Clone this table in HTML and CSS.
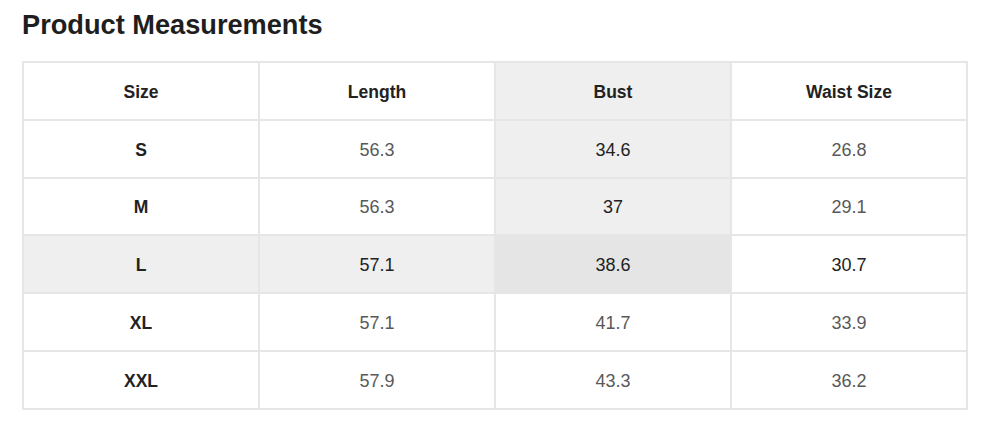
FILE: index.html
```html
<!DOCTYPE html>
<html>
<head>
<meta charset="utf-8">
<link rel="stylesheet" href="styles.css">
</head>
<body>
<h1 class="title">Product Measurements</h1>
<table class="measure">
  <thead>
    <tr><th>Size</th><th>Length</th><th class="hl">Bust</th><th>Waist Size</th></tr>
  </thead>
  <tbody>
    <tr><td class="size">S</td><td>56.3</td><td class="hl">34.6</td><td>26.8</td></tr>
    <tr><td class="size">M</td><td>56.3</td><td class="hl">37</td><td>29.1</td></tr>
    <tr><td class="size hl">L</td><td class="hl">57.1</td><td class="hl-cross">38.6</td><td class="dark">30.7</td></tr>
    <tr><td class="size">XL</td><td>57.1</td><td>41.7</td><td>33.9</td></tr>
    <tr><td class="size">XXL</td><td>57.9</td><td>43.3</td><td>36.2</td></tr>
  </tbody>
</table>
</body>
</html>
```
FILE: styles.css
```css
html, body {
  margin: 0;
  background: #ffffff;
}
body {
  padding: 9px 22px 0 22px;
  font-family: "Liberation Sans", Arial, sans-serif;
  color: #222222;
}
.title {
  margin: 0 0 20px 0;
  font-size: 27.2px;
  line-height: 32px;
  font-weight: 700;
  color: #1e1e1e;
}
.measure {
  width: 946px;
  border-collapse: collapse;
  table-layout: fixed;
  border: 2px solid #e6e6e6;
}
.measure th,
.measure td {
  border: 2px solid #e6e6e6;
  height: 52.8px;
  padding: 3px 0 0 0;
  text-align: center;
  vertical-align: middle;
  font-size: 18px;
  color: #595959;
}
.measure th {
  font-weight: 700;
  font-size: 17.5px;
  color: #222222;
}
.measure td.size {
  font-weight: 700;
  font-size: 17.5px;
  color: #222222;
}
.measure .hl {
  background: #efefef;
  color: #222222;
}
.measure .hl-cross {
  background: #e5e5e5;
  color: #222222;
}
.measure .dark {
  color: #222222;
}
```
